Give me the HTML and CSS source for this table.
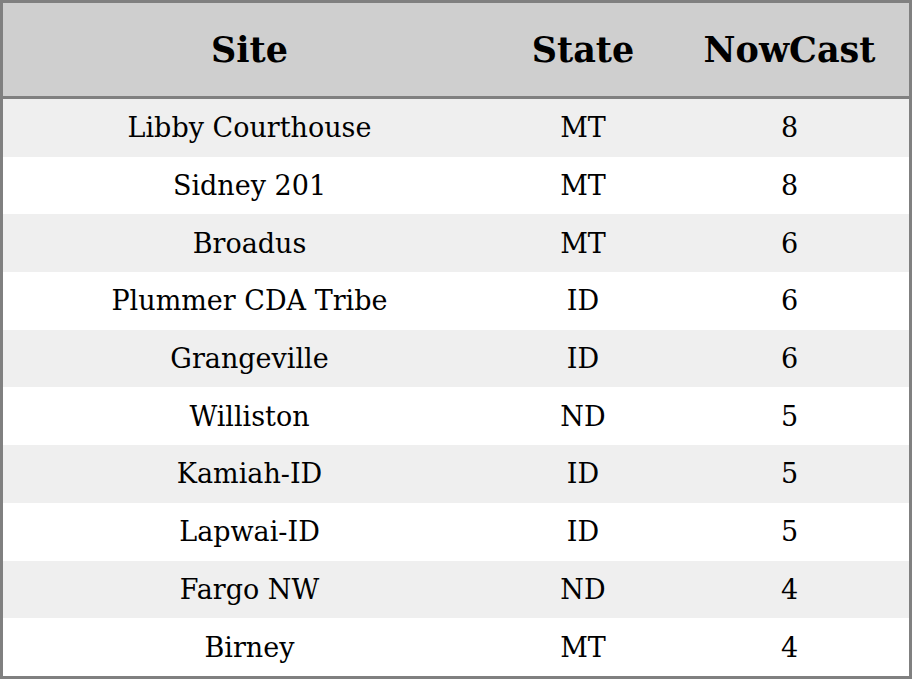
FILE: index.html
```html
<!DOCTYPE html>
<html>
<head>
<meta charset="utf-8">
<link rel="stylesheet" href="styles.css">
</head>
<body>
<table class="aq">
<thead>
<tr><th class="c-site">Site</th><th class="c-state">State</th><th class="c-now">NowCast</th></tr>
</thead>
<tbody>
<tr><td>Libby Courthouse</td><td>MT</td><td>8</td></tr>
<tr><td>Sidney 201</td><td>MT</td><td>8</td></tr>
<tr><td>Broadus</td><td>MT</td><td>6</td></tr>
<tr><td>Plummer CDA Tribe</td><td>ID</td><td>6</td></tr>
<tr><td>Grangeville</td><td>ID</td><td>6</td></tr>
<tr><td>Williston</td><td>ND</td><td>5</td></tr>
<tr><td>Kamiah-ID</td><td>ID</td><td>5</td></tr>
<tr><td>Lapwai-ID</td><td>ID</td><td>5</td></tr>
<tr><td>Fargo NW</td><td>ND</td><td>4</td></tr>
<tr><td>Birney</td><td>MT</td><td>4</td></tr>
</tbody>
</table>
</body>
</html>
```
FILE: styles.css
```css
html, body {
  margin: 0;
  padding: 0;
  background: #ffffff;
}
.aq {
  width: 912px;
  height: 679px;
  border-collapse: collapse;
  border: 3px solid #808080;
  font-family: "DejaVu Serif", serif;
  color: #000;
  table-layout: fixed;
}
.aq th {
  background: #cfcfcf;
  font-size: 35px;
  font-weight: bold;
  height: 93px;
  padding: 0;
  border-bottom: 3px solid #808080;
  text-align: center;
}
.c-site { width: 493px; }
.c-state { width: 174px; }
.c-now { width: 239px; }
.aq td {
  font-size: 27px;
  text-align: center;
  padding: 0;
  height: 57.7px;
}
.aq tbody tr:nth-child(odd) td {
  background: #efefef;
}
```
